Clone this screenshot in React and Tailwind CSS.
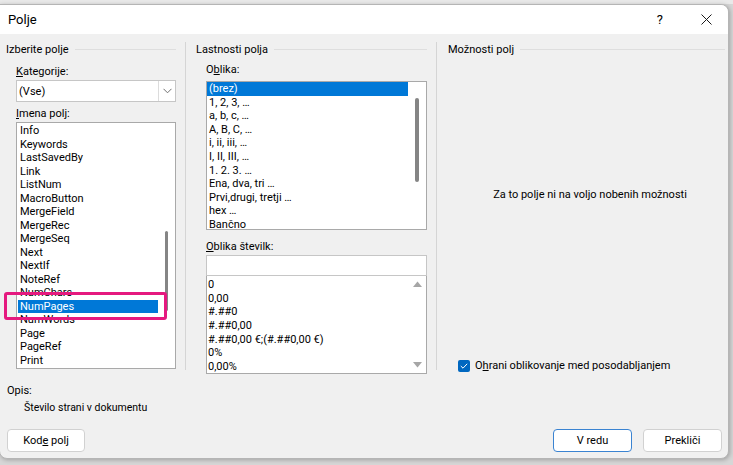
import React from 'react';

const font = "font-['Roboto',sans-serif]";

const names = [
  'Info', 'Keywords', 'LastSavedBy', 'Link', 'ListNum', 'MacroButton', 'MergeField',
  'MergeRec', 'MergeSeq', 'Next', 'NextIf', 'NoteRef', 'NumChars', 'NumPages',
  'NumWords', 'Page', 'PageRef', 'Print',
];

const formats = [
  '(brez)', '1, 2, 3, …', 'a, b, c, …', 'A, B, C, …', 'i, ii, iii, …', 'I, II, III, …',
  '1. 2. 3. …', 'Ena, dva, tri …', 'Prvi,drugi, tretji …', 'hex …', 'Bančno',
];

const numbers = ['0', '0,00', '#.##0', '#.##0,00', '#.##0,00 €;(#.##0,00 €)', '0%', '0,00%'];

const GroupHeader = ({ children }) => (
  <div className="flex items-center gap-[6px] h-[15px]">
    <span className="whitespace-nowrap">{children}</span>
    <div className="flex-1 h-px bg-[#dedede]" />
  </div>
);

const App = () => {
  return (
    <div className={`${font} relative w-[733px] h-[465px] overflow-hidden bg-[#d6d6d6] text-[11px] text-black leading-[15px]`}>
      <div className="h-[4px] bg-[#e9e9e9]" />
      <div className="-ml-px w-[730px] h-[455px] flex flex-col bg-[#f0f0f0] border border-[#b5b5b5] rounded-tr-[8px] rounded-b-[8px] overflow-hidden shadow-[1px_1px_4px_rgba(0,0,0,0.25)]">
        {/* title bar */}
        <div className="h-[29px] bg-white flex items-center pl-[8px] shrink-0">
          <span className="text-[13px]">Polje</span>
          <div className="flex-1" />
          <span className="text-[13px] mr-[38px]">?</span>
          <svg width="11" height="11" viewBox="0 0 11 11" className="mr-[16px]">
            <path d="M0.5 0.5L10.5 10.5M10.5 0.5L0.5 10.5" stroke="#1a1a1a" strokeWidth="1" />
          </svg>
        </div>

        {/* main area */}
        <div className="flex h-[344px] pt-[8px] shrink-0">
          {/* left column */}
          <div className="w-[186px] pl-[6px] pr-[9px] border-r border-[#d5d5d5] h-[328px] shrink-0">
            <GroupHeader>Izberite polje</GroupHeader>
            <div className="pl-[10px]">
              <div className="mt-[7px]"><u>K</u>ategorije:</div>
              <div className="mt-[1px] h-[22px] flex bg-white border border-[#c6c6c6]">
                <div className="flex-1 pl-[2px] flex items-center">(Vse)</div>
                <div className="w-[17px] border-l border-[#dcdcdc] flex items-center justify-center">
                  <svg width="9" height="6" viewBox="0 0 9 6">
                    <path d="M0.5 0.8L4.5 4.8L8.5 0.8" stroke="#707070" fill="none" strokeWidth="1" />
                  </svg>
                </div>
              </div>
              <div className="mt-[4px]"><u>I</u>mena polj:</div>
              <div className="mt-[1px] h-[247px] flex bg-white border border-[#a9a9a9]">
                <div className="flex-1 pt-[1px] pl-[1px]">
                  {names.map((n) => (
                    <div
                      key={n}
                      className={`h-[13.5px] leading-[13.5px] pl-[2px] whitespace-nowrap ${n === 'NumPages' ? 'bg-[#0078d7] text-white' : ''}`}
                    >
                      {n}
                    </div>
                  ))}
                </div>
                <div className="w-[17px] flex justify-center pt-[108px]">
                  <div className="w-[3px] h-[80px] rounded-full bg-[#858585]" />
                </div>
              </div>
            </div>
          </div>

          {/* middle column */}
          <div className="w-[251px] pl-[10px] pr-[9px] border-r border-[#d5d5d5] h-[328px] shrink-0">
            <GroupHeader>Lastnosti polja</GroupHeader>
            <div className="pl-[10px]">
              <div className="mt-[5px]">O<u>b</u>lika:</div>
              <div className="mt-[4px] h-[149px] flex bg-white border border-[#a9a9a9]">
                <div className="flex-1">
                  {formats.map((f) => (
                    <div
                      key={f}
                      className={`h-[13.6px] leading-[13.6px] pl-[2px] whitespace-nowrap ${f === '(brez)' ? 'bg-[#0078d7] text-white' : ''}`}
                    >
                      {f}
                    </div>
                  ))}
                </div>
                <div className="w-[18px] flex justify-center pt-[16px]">
                  <div className="w-[4px] h-[84px] rounded-full bg-[#858585]" />
                </div>
              </div>
              <div className="mt-[9px]"><u>O</u>blika številk:</div>
              <div className="mt-[1px] h-[21px] bg-white border border-[#c6c6c6]" />
              <div className="h-[98px] flex bg-white border border-[#a9a9a9] border-t-0">
                <div className="flex-1 pt-[2px]">
                  {numbers.map((n) => (
                    <div key={n} className="h-[13.67px] leading-[13.67px] pl-[1px] whitespace-nowrap">{n}</div>
                  ))}
                </div>
                <div className="w-[18px] flex flex-col items-center justify-between pt-[5px] pb-[5px]">
                  <svg width="9" height="6" viewBox="0 0 9 6"><path d="M0 6L4.5 0.5L9 6Z" fill="#a6a6a6" /></svg>
                  <svg width="9" height="6" viewBox="0 0 9 6"><path d="M0 0L4.5 5.5L9 0Z" fill="#a6a6a6" /></svg>
                </div>
              </div>
            </div>
          </div>

          {/* right column */}
          <div className="flex-1 pl-[11px] pr-[3px] flex flex-col h-[336px]">
            <GroupHeader>Možnosti polj</GroupHeader>
            <div className="flex-1 flex flex-col">
              <div className="pt-[130px] pl-[7px] text-center whitespace-nowrap">Za to polje ni na voljo nobenih možnosti</div>
              <div className="flex-1" />
              <div className="flex items-center gap-[5px] pl-[10px] mb-[5px]">
                <div className="w-[12px] h-[12px] rounded-[2px] bg-[#0067c0] flex items-center justify-center">
                  <svg width="8" height="6" viewBox="0 0 8 6">
                    <path d="M0.8 3L3 5.2L7.2 0.8" stroke="white" strokeWidth="1" fill="none" />
                  </svg>
                </div>
                <span>O<u>h</u>rani oblikovanje med posodabljanjem</span>
              </div>
            </div>
          </div>
        </div>

        {/* bottom */}
        <div className="pl-[7px] pt-[5px]">
          <div>Opis:</div>
          <div className="pl-[17px] mt-[2px] text-[10.5px]">Število strani v dokumentu</div>
        </div>
        <div className="flex items-center mt-[14px] pl-[7px] pr-[6px]">
          <button className="w-[78px] h-[23px] bg-white border border-[#d1d1d1] rounded-[4px]">Kod<u>e</u> polj</button>
          <div className="flex-1" />
          <button className="w-[79px] h-[23px] bg-white border border-[#3a83d1] rounded-[4px]">V redu</button>
          <button className="w-[79px] h-[23px] bg-white border border-[#d1d1d1] rounded-[4px] ml-[11px]">Prekliči</button>
        </div>
      </div>

      {/* pink annotation */}
      <div className="absolute left-[4px] top-[292px] w-[163px] h-[28px] border-[3px] border-[#e5197f] rounded-[3px]" />
    </div>
  );
};

export default App;
